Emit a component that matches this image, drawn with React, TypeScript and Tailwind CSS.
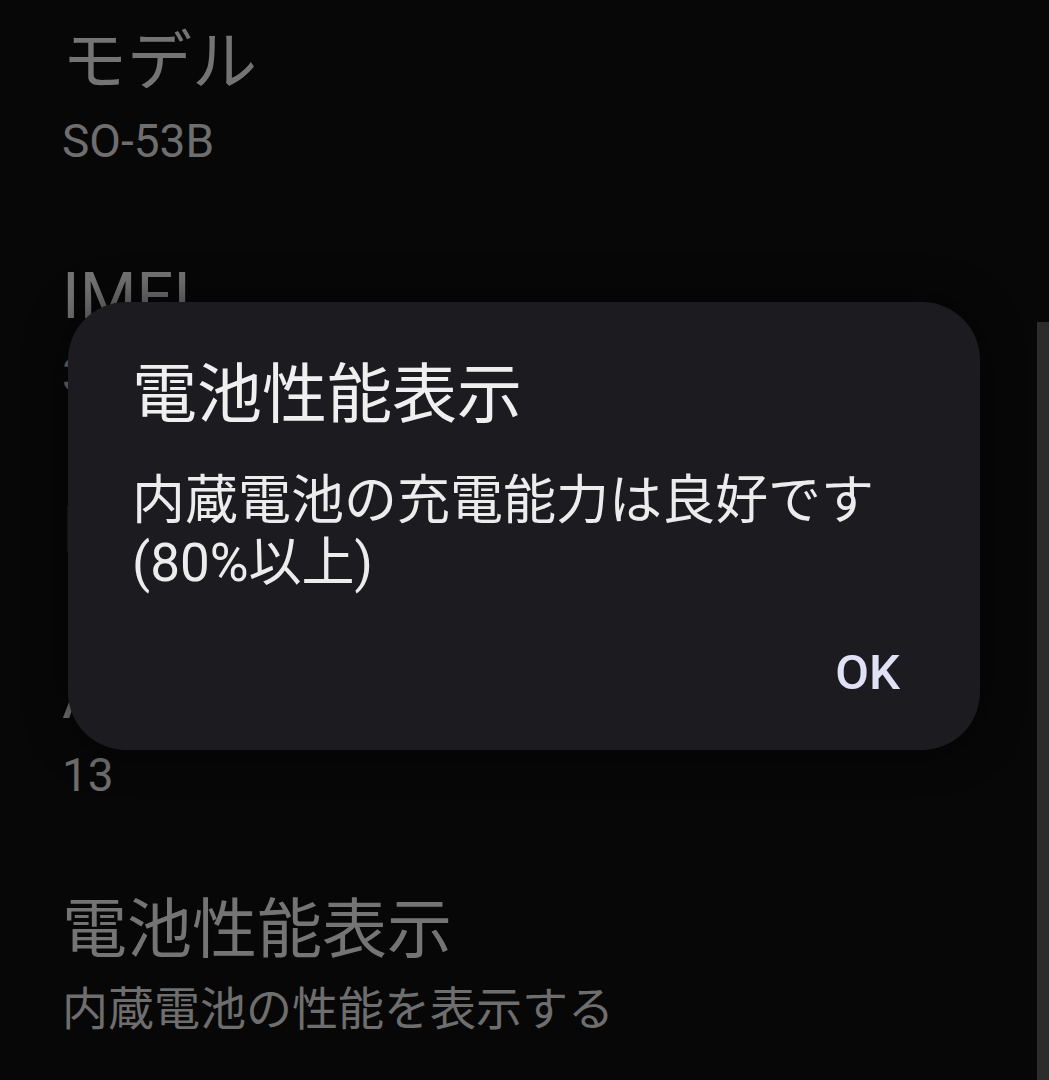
const rows = [
  { title: 'モデル', value: 'SO-53B' },
  { title: 'IMEI', value: '35XXXXXXXXXXXXX' },
  { title: 'IMEI', value: null },
  { title: 'Android バージョン', value: '13' },
  { title: '電池性能表示', value: '内蔵電池の性能を表示する' },
]

function InfoRow({ title, value }: { title: string; value: string | null }) {
  return (
    <div className="flex flex-col">
      <div className="text-[65px] leading-[80px] text-[#747474]">{title}</div>
      {value && <div className="mt-[10px] text-[46px] leading-[58px] text-[#6e6e6e]">{value}</div>}
    </div>
  )
}

export default function App() {
  return (
    <div className="relative h-[1080px] w-full overflow-hidden bg-[#070707] font-['Roboto','Noto_Sans_CJK_JP',sans-serif]">
      {/* dimmed settings list behind the dialog */}
      <div className="flex flex-col gap-[86px] pl-[62px] pt-[22px] whitespace-nowrap">
        {rows.map((r, i) => (
          <InfoRow key={i} title={r.title} value={r.value} />
        ))}
      </div>

      {/* scrollbar */}
      <div className="absolute right-0 top-[322px] bottom-0 w-[12px] bg-[#2c2c2c]" />

      {/* dialog */}
      <div className="absolute left-[68px] top-[302px] flex h-[448px] w-[912px] flex-col rounded-[58px] bg-[#1c1b20] pl-[64px] pr-[80px] pt-[55px] shadow-[0_0_40px_rgba(0,0,0,0.6)]">
        <h2 className="text-[65px] leading-[76px] text-[#efefef]">電池性能表示</h2>
        <p className="mt-[37px] text-[53px] leading-[62px] text-[#ececec]">
          内蔵電池の充電能力は良好です
          <br />
          (80%以上)
        </p>
        <div className="mt-[51px] flex justify-end">
          <button className="text-[49px] font-medium leading-[56px] text-[#e0e0f6]">OK</button>
        </div>
      </div>
    </div>
  )
}
